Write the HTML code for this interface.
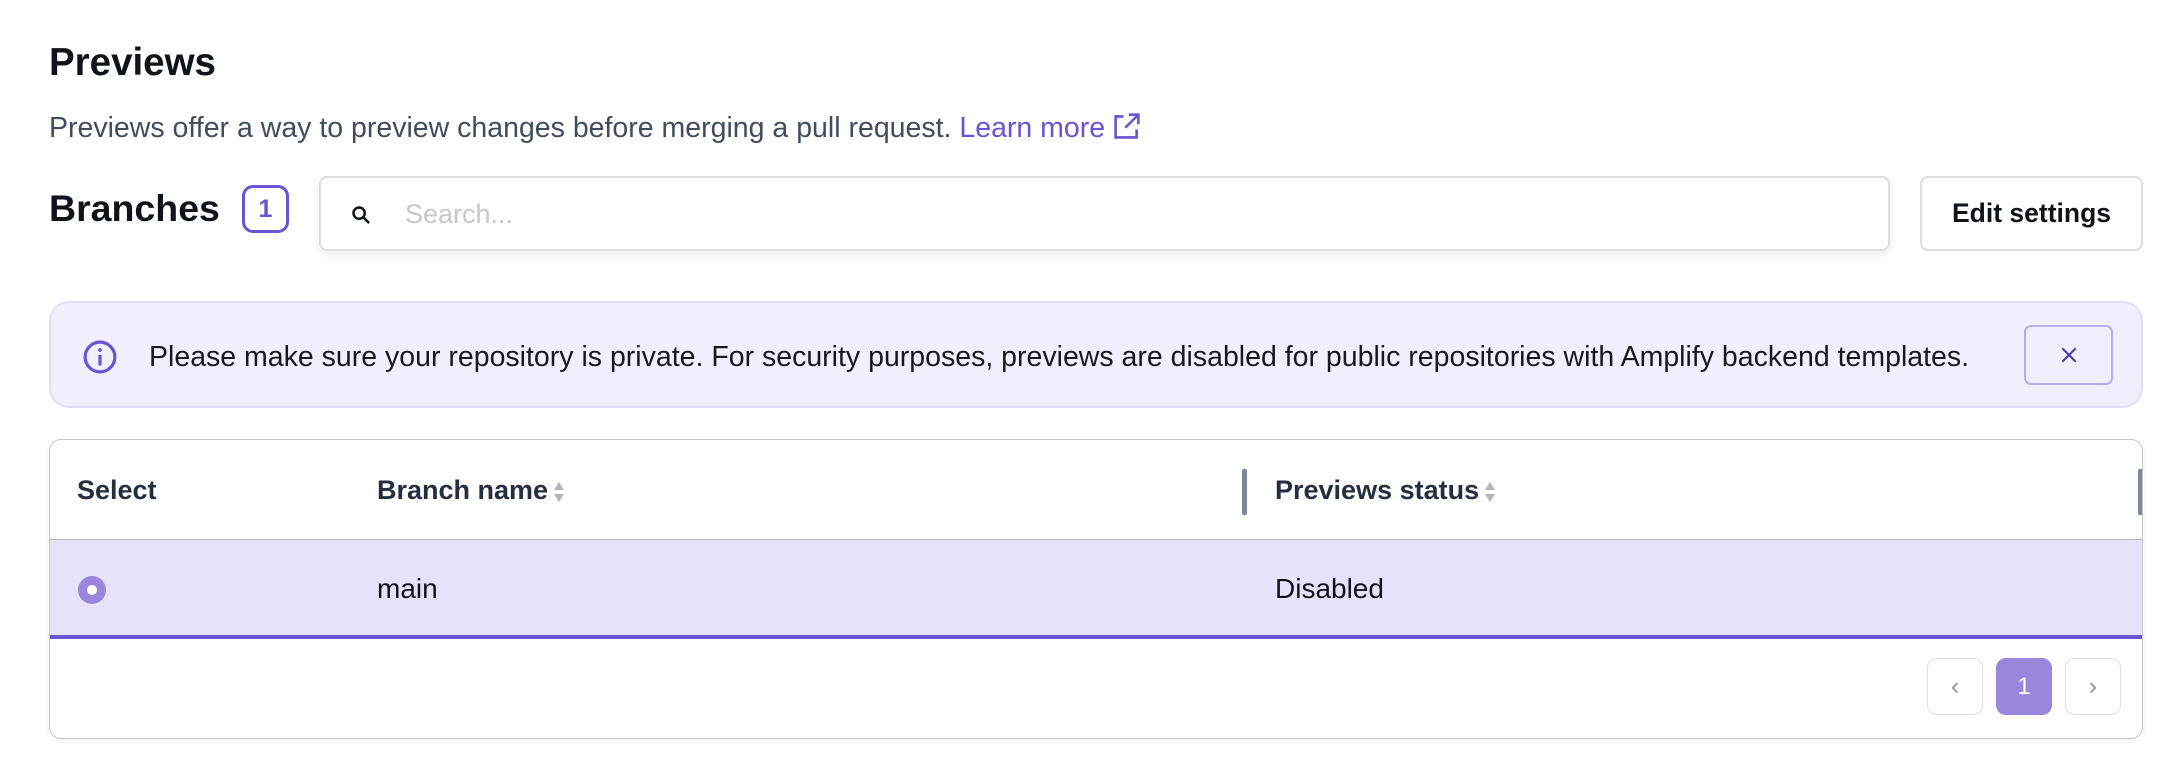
<!DOCTYPE html>
<html><head><meta charset="utf-8"><style>
*{box-sizing:border-box;margin:0;padding:0}
body{width:2178px;height:782px;background:#fff;font-family:"Liberation Sans",sans-serif;color:#16191f;position:relative;overflow:hidden}
.abs{position:absolute}
h1{position:absolute;left:49px;top:41px;font-size:38.5px;font-weight:bold;color:#0f141a}
.desc{left:49px;top:112px;font-size:28.5px;color:#414d5c;white-space:nowrap}
.desc a{color:#6b53d3;text-decoration:none}
.br{left:49px;top:187px;font-size:37.5px;font-weight:bold;color:#0f141a}
.badge{left:242px;top:185px;width:47px;height:48px;border:3px solid #6b53d3;border-radius:11px;color:#6b53d3;font-size:25px;font-weight:bold;display:flex;align-items:center;justify-content:center}
.search{left:319px;top:176px;width:1571px;height:75px;border:2px solid #ddd;border-radius:8px;box-shadow:0 4px 10px rgba(0,0,0,.08)}
.search span{position:absolute;left:84px;top:21px;font-size:27px;color:#c6c6cd}
.edit{left:1920px;top:176px;width:223px;height:75px;border:2px solid #ddd;border-radius:8px;font-size:26.5px;font-weight:bold;display:flex;align-items:center;justify-content:center;color:#0f141a}
.alert{left:49px;top:301px;width:2094px;height:107px;background:#f1effd;border:2px solid #e3ddfb;border-radius:20px}
.alert .t{position:absolute;left:98px;top:38px;font-size:28.5px;white-space:nowrap;color:#16191f}
.close{left:1973px;top:22px;width:89px;height:60px;border:2px solid #b8acf0;border-radius:7px;display:flex;align-items:center;justify-content:center}
.table{left:49px;top:439px;width:2094px;height:300px;border:1.5px solid #c6c6cd;border-radius:12px;overflow:hidden;box-shadow:0 3px 8px rgba(0,0,0,.05)}
.hd{position:absolute;top:35px;font-size:27px;font-weight:bold;color:#232f3e}
.row{position:absolute;left:0;top:99px;width:100%;height:100px;background:#e6e2f9;border-top:1.5px solid #b4b4bb;border-bottom:4px solid #6b53d3}
.cell{position:absolute;top:33px;font-size:28px;color:#0f141a}
.pg{position:absolute;top:218px;width:56px;height:57px;border:1.5px solid #ddd;border-radius:10px;display:flex;align-items:center;justify-content:center;font-size:24px;color:#8c8c94}
.sort{display:inline-block;vertical-align:middle;margin-left:4px}
</style></head><body>
<h1>Previews</h1>
<div class="abs desc">Previews offer a way to preview changes before merging a pull request. <a>Learn more <svg width="28" height="28" viewBox="0 0 16 16" style="vertical-align:-3px"><path d="M9 1.5h5.5V7M14.5 1.5L7 9M6 2.5H1.5v12h12V10" fill="none" stroke="#6b53d3" stroke-width="1.5"/></svg></a></div>
<div class="abs br">Branches</div>
<div class="abs badge">1</div>
<div class="abs search"><svg class="abs" style="left:30px;top:27px" width="20" height="20" viewBox="0 0 16 16"><circle cx="6.5" cy="6.5" r="4.5" fill="none" stroke="#0f141a" stroke-width="2"/><path d="M10 10l4.5 4.5" stroke="#0f141a" stroke-width="2"/></svg><span>Search...</span></div>
<div class="abs edit">Edit settings</div>
<div class="abs alert">
<svg class="abs" style="left:32px;top:37px" width="34" height="34" viewBox="0 0 16 16"><circle cx="8" cy="8" r="7" fill="none" stroke="#6b53d3" stroke-width="1.5"/><path d="M8 7v5" stroke="#6b53d3" stroke-width="1.5"/><circle cx="8" cy="4.7" r="0.9" fill="#6b53d3"/></svg>
<div class="t">Please make sure your repository is private. For security purposes, previews are disabled for public repositories with Amplify backend templates.</div>
<div class="abs close"><svg width="18" height="18" viewBox="0 0 16 16"><path d="M2 2l12 12M14 2L2 14" stroke="#4b3aa3" stroke-width="1.8"/></svg></div>
</div>
<div class="abs table">
<div class="hd" style="left:27px">Select</div>
<div class="hd" style="left:327px">Branch name<svg class="sort" width="14" height="24" viewBox="0 0 14 24"><path d="M7 2L12 10H2z" fill="#b4b4bb"/><path d="M7 22L12 14H2z" fill="#b4b4bb"/></svg></div>
<div class="abs" style="left:1192px;top:29px;width:5px;height:46px;background:#7d8998;border-radius:2px"></div>
<div class="hd" style="left:1225px">Previews status<svg class="sort" width="14" height="24" viewBox="0 0 14 24"><path d="M7 2L12 10H2z" fill="#b4b4bb"/><path d="M7 22L12 14H2z" fill="#b4b4bb"/></svg></div>
<div class="abs" style="left:2088px;top:29px;width:5px;height:46px;background:#7d8998;border-radius:2px"></div>
<div class="row">
<div class="abs" style="left:28px;top:36px;width:28px;height:28px;border-radius:50%;background:#9a87dd"><div class="abs" style="left:9px;top:9px;width:10px;height:10px;border-radius:50%;background:#fff"></div></div>
<div class="cell" style="left:327px">main</div>
<div class="cell" style="left:1225px">Disabled</div>
</div>
<div class="pg" style="left:1877px">&#x2039;</div>
<div class="pg" style="left:1946px;background:#9a87dd;border-color:#9a87dd;color:#fff">1</div>
<div class="pg" style="left:2015px">&#x203A;</div>
</div>
</body></html>
